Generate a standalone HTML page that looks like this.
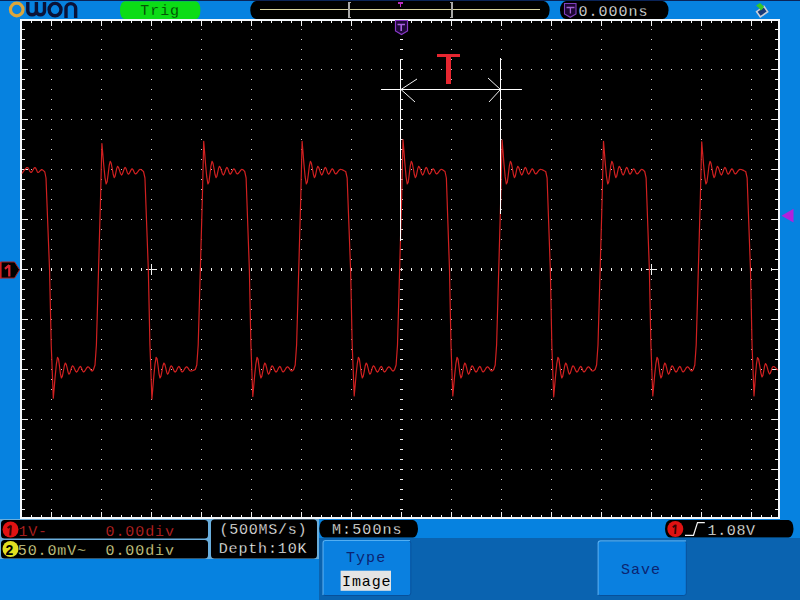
<!DOCTYPE html>
<html><head><meta charset="utf-8"><style>
html,body{margin:0;padding:0;width:800px;height:600px;overflow:hidden;background:#0682e0}
svg{display:block;position:absolute;left:0;top:0}
</style></head><body>
<svg width="800" height="600" viewBox="0 0 800 600">
<rect x="0" y="0" width="800" height="600" fill="#0682e0"/>
<rect x="0" y="0" width="800" height="1" fill="#0a2458"/>
<!-- logo -->
<circle cx="16.75" cy="9.5" r="6.3" fill="none" stroke="#dca63c" stroke-width="3.2"/>
<g fill="none" stroke="#0a1238" stroke-width="3.4">
<path d="M27.8,2 V11 A4.3,3.8 0 0 0 36.4,11 V2 M36.4,11 A4.05,3.8 0 0 0 44.5,11 V2"/>
<ellipse cx="55.05" cy="9.6" rx="5.95" ry="6.2"/>
<path d="M66,18 V8.2 A4.83,4.8 0 0 1 75.65,8.2 V18"/>
</g>
<!-- Trig -->
<rect x="120" y="1.2" width="80.4" height="17.9" rx="4.5" ry="8.7" fill="#0cdc16"/>
<text x="140.3" y="14.5" font-family="Liberation Mono" font-size="15" stroke="#0cdc16" stroke-width="0.3" letter-spacing="0.93" fill="#002000">Trig</text>
<!-- trigger position bar -->
<rect x="250.3" y="1.1" width="299.3" height="17.9" rx="6" ry="8.7" fill="#000"/>
<rect x="260" y="9" width="280" height="1" fill="#d8d4a0"/>
<g fill="#a8a8a8" shape-rendering="crispEdges">
<rect x="348" y="2" width="2" height="16"/><rect x="348" y="2" width="3" height="1"/><rect x="348" y="17" width="3" height="1"/>
<rect x="451" y="2" width="2" height="16"/><rect x="450" y="2" width="3" height="1"/><rect x="450" y="17" width="3" height="1"/>
</g>
<g fill="#b82cc0" shape-rendering="crispEdges"><rect x="398" y="2" width="5" height="2"/><rect x="400" y="4" width="1" height="3"/></g>
<!-- time pill -->
<rect x="560" y="1.1" width="108.5" height="17.9" rx="6" ry="8.7" fill="#000"/>
<path d="M564.5,3.5 h11.5 v10.5 l-5.75,3.3 l-5.75,-3.3 z" fill="#1e0634" stroke="#8040c0" stroke-width="1.1"/>
<path d="M566.5,7.5 h8 M570.4,7.5 v6" stroke="#a060d0" stroke-width="1.3" fill="none"/>
<text x="578.5" y="16" font-family="Liberation Mono" font-size="15" stroke="#000" stroke-width="0.3" letter-spacing="1.0" fill="#ffffff">0.000ns</text>
<!-- usb icon -->
<g transform="translate(762,11.5) rotate(-35)">
<rect x="-4.5" y="-3" width="9" height="6.5" fill="#1a3a78" stroke="#c8ccd8" stroke-width="1.6"/>
</g>
<path d="M756,5.5 L760,3 L764,6.5 L762.5,9 L760.5,10.5 L759,8 Z" fill="#38c828"/>
<!-- screen -->
<rect x="20" y="19" width="760" height="500" fill="#f4f8fc"/>
<rect x="22" y="21" width="756" height="496" fill="#000"/>
<path d="M31,69h1v1h-1zM41,69h1v1h-1zM51,69h1v1h-1zM61,69h1v1h-1zM71,69h1v1h-1zM81,69h1v1h-1zM91,69h1v1h-1zM101,69h1v1h-1zM111,69h1v1h-1zM121,69h1v1h-1zM131,69h1v1h-1zM141,69h1v1h-1zM151,69h1v1h-1zM161,69h1v1h-1zM171,69h1v1h-1zM181,69h1v1h-1zM191,69h1v1h-1zM201,69h1v1h-1zM211,69h1v1h-1zM221,69h1v1h-1zM231,69h1v1h-1zM241,69h1v1h-1zM251,69h1v1h-1zM261,69h1v1h-1zM271,69h1v1h-1zM281,69h1v1h-1zM291,69h1v1h-1zM301,69h1v1h-1zM311,69h1v1h-1zM321,69h1v1h-1zM331,69h1v1h-1zM341,69h1v1h-1zM351,69h1v1h-1zM361,69h1v1h-1zM371,69h1v1h-1zM381,69h1v1h-1zM391,69h1v1h-1zM401,69h1v1h-1zM411,69h1v1h-1zM421,69h1v1h-1zM431,69h1v1h-1zM441,69h1v1h-1zM451,69h1v1h-1zM461,69h1v1h-1zM471,69h1v1h-1zM481,69h1v1h-1zM491,69h1v1h-1zM501,69h1v1h-1zM511,69h1v1h-1zM521,69h1v1h-1zM531,69h1v1h-1zM541,69h1v1h-1zM551,69h1v1h-1zM561,69h1v1h-1zM571,69h1v1h-1zM581,69h1v1h-1zM591,69h1v1h-1zM601,69h1v1h-1zM611,69h1v1h-1zM621,69h1v1h-1zM631,69h1v1h-1zM641,69h1v1h-1zM651,69h1v1h-1zM661,69h1v1h-1zM671,69h1v1h-1zM681,69h1v1h-1zM691,69h1v1h-1zM701,69h1v1h-1zM711,69h1v1h-1zM721,69h1v1h-1zM731,69h1v1h-1zM741,69h1v1h-1zM751,69h1v1h-1zM761,69h1v1h-1zM771,69h1v1h-1zM31,119h1v1h-1zM41,119h1v1h-1zM51,119h1v1h-1zM61,119h1v1h-1zM71,119h1v1h-1zM81,119h1v1h-1zM91,119h1v1h-1zM101,119h1v1h-1zM111,119h1v1h-1zM121,119h1v1h-1zM131,119h1v1h-1zM141,119h1v1h-1zM151,119h1v1h-1zM161,119h1v1h-1zM171,119h1v1h-1zM181,119h1v1h-1zM191,119h1v1h-1zM201,119h1v1h-1zM211,119h1v1h-1zM221,119h1v1h-1zM231,119h1v1h-1zM241,119h1v1h-1zM251,119h1v1h-1zM261,119h1v1h-1zM271,119h1v1h-1zM281,119h1v1h-1zM291,119h1v1h-1zM301,119h1v1h-1zM311,119h1v1h-1zM321,119h1v1h-1zM331,119h1v1h-1zM341,119h1v1h-1zM351,119h1v1h-1zM361,119h1v1h-1zM371,119h1v1h-1zM381,119h1v1h-1zM391,119h1v1h-1zM401,119h1v1h-1zM411,119h1v1h-1zM421,119h1v1h-1zM431,119h1v1h-1zM441,119h1v1h-1zM451,119h1v1h-1zM461,119h1v1h-1zM471,119h1v1h-1zM481,119h1v1h-1zM491,119h1v1h-1zM501,119h1v1h-1zM511,119h1v1h-1zM521,119h1v1h-1zM531,119h1v1h-1zM541,119h1v1h-1zM551,119h1v1h-1zM561,119h1v1h-1zM571,119h1v1h-1zM581,119h1v1h-1zM591,119h1v1h-1zM601,119h1v1h-1zM611,119h1v1h-1zM621,119h1v1h-1zM631,119h1v1h-1zM641,119h1v1h-1zM651,119h1v1h-1zM661,119h1v1h-1zM671,119h1v1h-1zM681,119h1v1h-1zM691,119h1v1h-1zM701,119h1v1h-1zM711,119h1v1h-1zM721,119h1v1h-1zM731,119h1v1h-1zM741,119h1v1h-1zM751,119h1v1h-1zM761,119h1v1h-1zM771,119h1v1h-1zM31,169h1v1h-1zM41,169h1v1h-1zM51,169h1v1h-1zM61,169h1v1h-1zM71,169h1v1h-1zM81,169h1v1h-1zM91,169h1v1h-1zM101,169h1v1h-1zM111,169h1v1h-1zM121,169h1v1h-1zM131,169h1v1h-1zM141,169h1v1h-1zM151,169h1v1h-1zM161,169h1v1h-1zM171,169h1v1h-1zM181,169h1v1h-1zM191,169h1v1h-1zM201,169h1v1h-1zM211,169h1v1h-1zM221,169h1v1h-1zM231,169h1v1h-1zM241,169h1v1h-1zM251,169h1v1h-1zM261,169h1v1h-1zM271,169h1v1h-1zM281,169h1v1h-1zM291,169h1v1h-1zM301,169h1v1h-1zM311,169h1v1h-1zM321,169h1v1h-1zM331,169h1v1h-1zM341,169h1v1h-1zM351,169h1v1h-1zM361,169h1v1h-1zM371,169h1v1h-1zM381,169h1v1h-1zM391,169h1v1h-1zM401,169h1v1h-1zM411,169h1v1h-1zM421,169h1v1h-1zM431,169h1v1h-1zM441,169h1v1h-1zM451,169h1v1h-1zM461,169h1v1h-1zM471,169h1v1h-1zM481,169h1v1h-1zM491,169h1v1h-1zM501,169h1v1h-1zM511,169h1v1h-1zM521,169h1v1h-1zM531,169h1v1h-1zM541,169h1v1h-1zM551,169h1v1h-1zM561,169h1v1h-1zM571,169h1v1h-1zM581,169h1v1h-1zM591,169h1v1h-1zM601,169h1v1h-1zM611,169h1v1h-1zM621,169h1v1h-1zM631,169h1v1h-1zM641,169h1v1h-1zM651,169h1v1h-1zM661,169h1v1h-1zM671,169h1v1h-1zM681,169h1v1h-1zM691,169h1v1h-1zM701,169h1v1h-1zM711,169h1v1h-1zM721,169h1v1h-1zM731,169h1v1h-1zM741,169h1v1h-1zM751,169h1v1h-1zM761,169h1v1h-1zM771,169h1v1h-1zM31,219h1v1h-1zM41,219h1v1h-1zM51,219h1v1h-1zM61,219h1v1h-1zM71,219h1v1h-1zM81,219h1v1h-1zM91,219h1v1h-1zM101,219h1v1h-1zM111,219h1v1h-1zM121,219h1v1h-1zM131,219h1v1h-1zM141,219h1v1h-1zM151,219h1v1h-1zM161,219h1v1h-1zM171,219h1v1h-1zM181,219h1v1h-1zM191,219h1v1h-1zM201,219h1v1h-1zM211,219h1v1h-1zM221,219h1v1h-1zM231,219h1v1h-1zM241,219h1v1h-1zM251,219h1v1h-1zM261,219h1v1h-1zM271,219h1v1h-1zM281,219h1v1h-1zM291,219h1v1h-1zM301,219h1v1h-1zM311,219h1v1h-1zM321,219h1v1h-1zM331,219h1v1h-1zM341,219h1v1h-1zM351,219h1v1h-1zM361,219h1v1h-1zM371,219h1v1h-1zM381,219h1v1h-1zM391,219h1v1h-1zM401,219h1v1h-1zM411,219h1v1h-1zM421,219h1v1h-1zM431,219h1v1h-1zM441,219h1v1h-1zM451,219h1v1h-1zM461,219h1v1h-1zM471,219h1v1h-1zM481,219h1v1h-1zM491,219h1v1h-1zM501,219h1v1h-1zM511,219h1v1h-1zM521,219h1v1h-1zM531,219h1v1h-1zM541,219h1v1h-1zM551,219h1v1h-1zM561,219h1v1h-1zM571,219h1v1h-1zM581,219h1v1h-1zM591,219h1v1h-1zM601,219h1v1h-1zM611,219h1v1h-1zM621,219h1v1h-1zM631,219h1v1h-1zM641,219h1v1h-1zM651,219h1v1h-1zM661,219h1v1h-1zM671,219h1v1h-1zM681,219h1v1h-1zM691,219h1v1h-1zM701,219h1v1h-1zM711,219h1v1h-1zM721,219h1v1h-1zM731,219h1v1h-1zM741,219h1v1h-1zM751,219h1v1h-1zM761,219h1v1h-1zM771,219h1v1h-1zM31,319h1v1h-1zM41,319h1v1h-1zM51,319h1v1h-1zM61,319h1v1h-1zM71,319h1v1h-1zM81,319h1v1h-1zM91,319h1v1h-1zM101,319h1v1h-1zM111,319h1v1h-1zM121,319h1v1h-1zM131,319h1v1h-1zM141,319h1v1h-1zM151,319h1v1h-1zM161,319h1v1h-1zM171,319h1v1h-1zM181,319h1v1h-1zM191,319h1v1h-1zM201,319h1v1h-1zM211,319h1v1h-1zM221,319h1v1h-1zM231,319h1v1h-1zM241,319h1v1h-1zM251,319h1v1h-1zM261,319h1v1h-1zM271,319h1v1h-1zM281,319h1v1h-1zM291,319h1v1h-1zM301,319h1v1h-1zM311,319h1v1h-1zM321,319h1v1h-1zM331,319h1v1h-1zM341,319h1v1h-1zM351,319h1v1h-1zM361,319h1v1h-1zM371,319h1v1h-1zM381,319h1v1h-1zM391,319h1v1h-1zM401,319h1v1h-1zM411,319h1v1h-1zM421,319h1v1h-1zM431,319h1v1h-1zM441,319h1v1h-1zM451,319h1v1h-1zM461,319h1v1h-1zM471,319h1v1h-1zM481,319h1v1h-1zM491,319h1v1h-1zM501,319h1v1h-1zM511,319h1v1h-1zM521,319h1v1h-1zM531,319h1v1h-1zM541,319h1v1h-1zM551,319h1v1h-1zM561,319h1v1h-1zM571,319h1v1h-1zM581,319h1v1h-1zM591,319h1v1h-1zM601,319h1v1h-1zM611,319h1v1h-1zM621,319h1v1h-1zM631,319h1v1h-1zM641,319h1v1h-1zM651,319h1v1h-1zM661,319h1v1h-1zM671,319h1v1h-1zM681,319h1v1h-1zM691,319h1v1h-1zM701,319h1v1h-1zM711,319h1v1h-1zM721,319h1v1h-1zM731,319h1v1h-1zM741,319h1v1h-1zM751,319h1v1h-1zM761,319h1v1h-1zM771,319h1v1h-1zM31,369h1v1h-1zM41,369h1v1h-1zM51,369h1v1h-1zM61,369h1v1h-1zM71,369h1v1h-1zM81,369h1v1h-1zM91,369h1v1h-1zM101,369h1v1h-1zM111,369h1v1h-1zM121,369h1v1h-1zM131,369h1v1h-1zM141,369h1v1h-1zM151,369h1v1h-1zM161,369h1v1h-1zM171,369h1v1h-1zM181,369h1v1h-1zM191,369h1v1h-1zM201,369h1v1h-1zM211,369h1v1h-1zM221,369h1v1h-1zM231,369h1v1h-1zM241,369h1v1h-1zM251,369h1v1h-1zM261,369h1v1h-1zM271,369h1v1h-1zM281,369h1v1h-1zM291,369h1v1h-1zM301,369h1v1h-1zM311,369h1v1h-1zM321,369h1v1h-1zM331,369h1v1h-1zM341,369h1v1h-1zM351,369h1v1h-1zM361,369h1v1h-1zM371,369h1v1h-1zM381,369h1v1h-1zM391,369h1v1h-1zM401,369h1v1h-1zM411,369h1v1h-1zM421,369h1v1h-1zM431,369h1v1h-1zM441,369h1v1h-1zM451,369h1v1h-1zM461,369h1v1h-1zM471,369h1v1h-1zM481,369h1v1h-1zM491,369h1v1h-1zM501,369h1v1h-1zM511,369h1v1h-1zM521,369h1v1h-1zM531,369h1v1h-1zM541,369h1v1h-1zM551,369h1v1h-1zM561,369h1v1h-1zM571,369h1v1h-1zM581,369h1v1h-1zM591,369h1v1h-1zM601,369h1v1h-1zM611,369h1v1h-1zM621,369h1v1h-1zM631,369h1v1h-1zM641,369h1v1h-1zM651,369h1v1h-1zM661,369h1v1h-1zM671,369h1v1h-1zM681,369h1v1h-1zM691,369h1v1h-1zM701,369h1v1h-1zM711,369h1v1h-1zM721,369h1v1h-1zM731,369h1v1h-1zM741,369h1v1h-1zM751,369h1v1h-1zM761,369h1v1h-1zM771,369h1v1h-1zM31,419h1v1h-1zM41,419h1v1h-1zM51,419h1v1h-1zM61,419h1v1h-1zM71,419h1v1h-1zM81,419h1v1h-1zM91,419h1v1h-1zM101,419h1v1h-1zM111,419h1v1h-1zM121,419h1v1h-1zM131,419h1v1h-1zM141,419h1v1h-1zM151,419h1v1h-1zM161,419h1v1h-1zM171,419h1v1h-1zM181,419h1v1h-1zM191,419h1v1h-1zM201,419h1v1h-1zM211,419h1v1h-1zM221,419h1v1h-1zM231,419h1v1h-1zM241,419h1v1h-1zM251,419h1v1h-1zM261,419h1v1h-1zM271,419h1v1h-1zM281,419h1v1h-1zM291,419h1v1h-1zM301,419h1v1h-1zM311,419h1v1h-1zM321,419h1v1h-1zM331,419h1v1h-1zM341,419h1v1h-1zM351,419h1v1h-1zM361,419h1v1h-1zM371,419h1v1h-1zM381,419h1v1h-1zM391,419h1v1h-1zM401,419h1v1h-1zM411,419h1v1h-1zM421,419h1v1h-1zM431,419h1v1h-1zM441,419h1v1h-1zM451,419h1v1h-1zM461,419h1v1h-1zM471,419h1v1h-1zM481,419h1v1h-1zM491,419h1v1h-1zM501,419h1v1h-1zM511,419h1v1h-1zM521,419h1v1h-1zM531,419h1v1h-1zM541,419h1v1h-1zM551,419h1v1h-1zM561,419h1v1h-1zM571,419h1v1h-1zM581,419h1v1h-1zM591,419h1v1h-1zM601,419h1v1h-1zM611,419h1v1h-1zM621,419h1v1h-1zM631,419h1v1h-1zM641,419h1v1h-1zM651,419h1v1h-1zM661,419h1v1h-1zM671,419h1v1h-1zM681,419h1v1h-1zM691,419h1v1h-1zM701,419h1v1h-1zM711,419h1v1h-1zM721,419h1v1h-1zM731,419h1v1h-1zM741,419h1v1h-1zM751,419h1v1h-1zM761,419h1v1h-1zM771,419h1v1h-1zM31,469h1v1h-1zM41,469h1v1h-1zM51,469h1v1h-1zM61,469h1v1h-1zM71,469h1v1h-1zM81,469h1v1h-1zM91,469h1v1h-1zM101,469h1v1h-1zM111,469h1v1h-1zM121,469h1v1h-1zM131,469h1v1h-1zM141,469h1v1h-1zM151,469h1v1h-1zM161,469h1v1h-1zM171,469h1v1h-1zM181,469h1v1h-1zM191,469h1v1h-1zM201,469h1v1h-1zM211,469h1v1h-1zM221,469h1v1h-1zM231,469h1v1h-1zM241,469h1v1h-1zM251,469h1v1h-1zM261,469h1v1h-1zM271,469h1v1h-1zM281,469h1v1h-1zM291,469h1v1h-1zM301,469h1v1h-1zM311,469h1v1h-1zM321,469h1v1h-1zM331,469h1v1h-1zM341,469h1v1h-1zM351,469h1v1h-1zM361,469h1v1h-1zM371,469h1v1h-1zM381,469h1v1h-1zM391,469h1v1h-1zM401,469h1v1h-1zM411,469h1v1h-1zM421,469h1v1h-1zM431,469h1v1h-1zM441,469h1v1h-1zM451,469h1v1h-1zM461,469h1v1h-1zM471,469h1v1h-1zM481,469h1v1h-1zM491,469h1v1h-1zM501,469h1v1h-1zM511,469h1v1h-1zM521,469h1v1h-1zM531,469h1v1h-1zM541,469h1v1h-1zM551,469h1v1h-1zM561,469h1v1h-1zM571,469h1v1h-1zM581,469h1v1h-1zM591,469h1v1h-1zM601,469h1v1h-1zM611,469h1v1h-1zM621,469h1v1h-1zM631,469h1v1h-1zM641,469h1v1h-1zM651,469h1v1h-1zM661,469h1v1h-1zM671,469h1v1h-1zM681,469h1v1h-1zM691,469h1v1h-1zM701,469h1v1h-1zM711,469h1v1h-1zM721,469h1v1h-1zM731,469h1v1h-1zM741,469h1v1h-1zM751,469h1v1h-1zM761,469h1v1h-1zM771,469h1v1h-1zM51,29h1v1h-1zM51,39h1v1h-1zM51,49h1v1h-1zM51,59h1v1h-1zM51,79h1v1h-1zM51,89h1v1h-1zM51,99h1v1h-1zM51,109h1v1h-1zM51,129h1v1h-1zM51,139h1v1h-1zM51,149h1v1h-1zM51,159h1v1h-1zM51,179h1v1h-1zM51,189h1v1h-1zM51,199h1v1h-1zM51,209h1v1h-1zM51,229h1v1h-1zM51,239h1v1h-1zM51,249h1v1h-1zM51,259h1v1h-1zM51,279h1v1h-1zM51,289h1v1h-1zM51,299h1v1h-1zM51,309h1v1h-1zM51,329h1v1h-1zM51,339h1v1h-1zM51,349h1v1h-1zM51,359h1v1h-1zM51,379h1v1h-1zM51,389h1v1h-1zM51,399h1v1h-1zM51,409h1v1h-1zM51,429h1v1h-1zM51,439h1v1h-1zM51,449h1v1h-1zM51,459h1v1h-1zM51,479h1v1h-1zM51,489h1v1h-1zM51,499h1v1h-1zM51,509h1v1h-1zM101,29h1v1h-1zM101,39h1v1h-1zM101,49h1v1h-1zM101,59h1v1h-1zM101,79h1v1h-1zM101,89h1v1h-1zM101,99h1v1h-1zM101,109h1v1h-1zM101,129h1v1h-1zM101,139h1v1h-1zM101,149h1v1h-1zM101,159h1v1h-1zM101,179h1v1h-1zM101,189h1v1h-1zM101,199h1v1h-1zM101,209h1v1h-1zM101,229h1v1h-1zM101,239h1v1h-1zM101,249h1v1h-1zM101,259h1v1h-1zM101,279h1v1h-1zM101,289h1v1h-1zM101,299h1v1h-1zM101,309h1v1h-1zM101,329h1v1h-1zM101,339h1v1h-1zM101,349h1v1h-1zM101,359h1v1h-1zM101,379h1v1h-1zM101,389h1v1h-1zM101,399h1v1h-1zM101,409h1v1h-1zM101,429h1v1h-1zM101,439h1v1h-1zM101,449h1v1h-1zM101,459h1v1h-1zM101,479h1v1h-1zM101,489h1v1h-1zM101,499h1v1h-1zM101,509h1v1h-1zM151,29h1v1h-1zM151,39h1v1h-1zM151,49h1v1h-1zM151,59h1v1h-1zM151,79h1v1h-1zM151,89h1v1h-1zM151,99h1v1h-1zM151,109h1v1h-1zM151,129h1v1h-1zM151,139h1v1h-1zM151,149h1v1h-1zM151,159h1v1h-1zM151,179h1v1h-1zM151,189h1v1h-1zM151,199h1v1h-1zM151,209h1v1h-1zM151,229h1v1h-1zM151,239h1v1h-1zM151,249h1v1h-1zM151,259h1v1h-1zM151,279h1v1h-1zM151,289h1v1h-1zM151,299h1v1h-1zM151,309h1v1h-1zM151,329h1v1h-1zM151,339h1v1h-1zM151,349h1v1h-1zM151,359h1v1h-1zM151,379h1v1h-1zM151,389h1v1h-1zM151,399h1v1h-1zM151,409h1v1h-1zM151,429h1v1h-1zM151,439h1v1h-1zM151,449h1v1h-1zM151,459h1v1h-1zM151,479h1v1h-1zM151,489h1v1h-1zM151,499h1v1h-1zM151,509h1v1h-1zM201,29h1v1h-1zM201,39h1v1h-1zM201,49h1v1h-1zM201,59h1v1h-1zM201,79h1v1h-1zM201,89h1v1h-1zM201,99h1v1h-1zM201,109h1v1h-1zM201,129h1v1h-1zM201,139h1v1h-1zM201,149h1v1h-1zM201,159h1v1h-1zM201,179h1v1h-1zM201,189h1v1h-1zM201,199h1v1h-1zM201,209h1v1h-1zM201,229h1v1h-1zM201,239h1v1h-1zM201,249h1v1h-1zM201,259h1v1h-1zM201,279h1v1h-1zM201,289h1v1h-1zM201,299h1v1h-1zM201,309h1v1h-1zM201,329h1v1h-1zM201,339h1v1h-1zM201,349h1v1h-1zM201,359h1v1h-1zM201,379h1v1h-1zM201,389h1v1h-1zM201,399h1v1h-1zM201,409h1v1h-1zM201,429h1v1h-1zM201,439h1v1h-1zM201,449h1v1h-1zM201,459h1v1h-1zM201,479h1v1h-1zM201,489h1v1h-1zM201,499h1v1h-1zM201,509h1v1h-1zM251,29h1v1h-1zM251,39h1v1h-1zM251,49h1v1h-1zM251,59h1v1h-1zM251,79h1v1h-1zM251,89h1v1h-1zM251,99h1v1h-1zM251,109h1v1h-1zM251,129h1v1h-1zM251,139h1v1h-1zM251,149h1v1h-1zM251,159h1v1h-1zM251,179h1v1h-1zM251,189h1v1h-1zM251,199h1v1h-1zM251,209h1v1h-1zM251,229h1v1h-1zM251,239h1v1h-1zM251,249h1v1h-1zM251,259h1v1h-1zM251,279h1v1h-1zM251,289h1v1h-1zM251,299h1v1h-1zM251,309h1v1h-1zM251,329h1v1h-1zM251,339h1v1h-1zM251,349h1v1h-1zM251,359h1v1h-1zM251,379h1v1h-1zM251,389h1v1h-1zM251,399h1v1h-1zM251,409h1v1h-1zM251,429h1v1h-1zM251,439h1v1h-1zM251,449h1v1h-1zM251,459h1v1h-1zM251,479h1v1h-1zM251,489h1v1h-1zM251,499h1v1h-1zM251,509h1v1h-1zM301,29h1v1h-1zM301,39h1v1h-1zM301,49h1v1h-1zM301,59h1v1h-1zM301,79h1v1h-1zM301,89h1v1h-1zM301,99h1v1h-1zM301,109h1v1h-1zM301,129h1v1h-1zM301,139h1v1h-1zM301,149h1v1h-1zM301,159h1v1h-1zM301,179h1v1h-1zM301,189h1v1h-1zM301,199h1v1h-1zM301,209h1v1h-1zM301,229h1v1h-1zM301,239h1v1h-1zM301,249h1v1h-1zM301,259h1v1h-1zM301,279h1v1h-1zM301,289h1v1h-1zM301,299h1v1h-1zM301,309h1v1h-1zM301,329h1v1h-1zM301,339h1v1h-1zM301,349h1v1h-1zM301,359h1v1h-1zM301,379h1v1h-1zM301,389h1v1h-1zM301,399h1v1h-1zM301,409h1v1h-1zM301,429h1v1h-1zM301,439h1v1h-1zM301,449h1v1h-1zM301,459h1v1h-1zM301,479h1v1h-1zM301,489h1v1h-1zM301,499h1v1h-1zM301,509h1v1h-1zM351,29h1v1h-1zM351,39h1v1h-1zM351,49h1v1h-1zM351,59h1v1h-1zM351,79h1v1h-1zM351,89h1v1h-1zM351,99h1v1h-1zM351,109h1v1h-1zM351,129h1v1h-1zM351,139h1v1h-1zM351,149h1v1h-1zM351,159h1v1h-1zM351,179h1v1h-1zM351,189h1v1h-1zM351,199h1v1h-1zM351,209h1v1h-1zM351,229h1v1h-1zM351,239h1v1h-1zM351,249h1v1h-1zM351,259h1v1h-1zM351,279h1v1h-1zM351,289h1v1h-1zM351,299h1v1h-1zM351,309h1v1h-1zM351,329h1v1h-1zM351,339h1v1h-1zM351,349h1v1h-1zM351,359h1v1h-1zM351,379h1v1h-1zM351,389h1v1h-1zM351,399h1v1h-1zM351,409h1v1h-1zM351,429h1v1h-1zM351,439h1v1h-1zM351,449h1v1h-1zM351,459h1v1h-1zM351,479h1v1h-1zM351,489h1v1h-1zM351,499h1v1h-1zM351,509h1v1h-1zM451,29h1v1h-1zM451,39h1v1h-1zM451,49h1v1h-1zM451,59h1v1h-1zM451,79h1v1h-1zM451,89h1v1h-1zM451,99h1v1h-1zM451,109h1v1h-1zM451,129h1v1h-1zM451,139h1v1h-1zM451,149h1v1h-1zM451,159h1v1h-1zM451,179h1v1h-1zM451,189h1v1h-1zM451,199h1v1h-1zM451,209h1v1h-1zM451,229h1v1h-1zM451,239h1v1h-1zM451,249h1v1h-1zM451,259h1v1h-1zM451,279h1v1h-1zM451,289h1v1h-1zM451,299h1v1h-1zM451,309h1v1h-1zM451,329h1v1h-1zM451,339h1v1h-1zM451,349h1v1h-1zM451,359h1v1h-1zM451,379h1v1h-1zM451,389h1v1h-1zM451,399h1v1h-1zM451,409h1v1h-1zM451,429h1v1h-1zM451,439h1v1h-1zM451,449h1v1h-1zM451,459h1v1h-1zM451,479h1v1h-1zM451,489h1v1h-1zM451,499h1v1h-1zM451,509h1v1h-1zM501,29h1v1h-1zM501,39h1v1h-1zM501,49h1v1h-1zM501,59h1v1h-1zM501,79h1v1h-1zM501,89h1v1h-1zM501,99h1v1h-1zM501,109h1v1h-1zM501,129h1v1h-1zM501,139h1v1h-1zM501,149h1v1h-1zM501,159h1v1h-1zM501,179h1v1h-1zM501,189h1v1h-1zM501,199h1v1h-1zM501,209h1v1h-1zM501,229h1v1h-1zM501,239h1v1h-1zM501,249h1v1h-1zM501,259h1v1h-1zM501,279h1v1h-1zM501,289h1v1h-1zM501,299h1v1h-1zM501,309h1v1h-1zM501,329h1v1h-1zM501,339h1v1h-1zM501,349h1v1h-1zM501,359h1v1h-1zM501,379h1v1h-1zM501,389h1v1h-1zM501,399h1v1h-1zM501,409h1v1h-1zM501,429h1v1h-1zM501,439h1v1h-1zM501,449h1v1h-1zM501,459h1v1h-1zM501,479h1v1h-1zM501,489h1v1h-1zM501,499h1v1h-1zM501,509h1v1h-1zM551,29h1v1h-1zM551,39h1v1h-1zM551,49h1v1h-1zM551,59h1v1h-1zM551,79h1v1h-1zM551,89h1v1h-1zM551,99h1v1h-1zM551,109h1v1h-1zM551,129h1v1h-1zM551,139h1v1h-1zM551,149h1v1h-1zM551,159h1v1h-1zM551,179h1v1h-1zM551,189h1v1h-1zM551,199h1v1h-1zM551,209h1v1h-1zM551,229h1v1h-1zM551,239h1v1h-1zM551,249h1v1h-1zM551,259h1v1h-1zM551,279h1v1h-1zM551,289h1v1h-1zM551,299h1v1h-1zM551,309h1v1h-1zM551,329h1v1h-1zM551,339h1v1h-1zM551,349h1v1h-1zM551,359h1v1h-1zM551,379h1v1h-1zM551,389h1v1h-1zM551,399h1v1h-1zM551,409h1v1h-1zM551,429h1v1h-1zM551,439h1v1h-1zM551,449h1v1h-1zM551,459h1v1h-1zM551,479h1v1h-1zM551,489h1v1h-1zM551,499h1v1h-1zM551,509h1v1h-1zM601,29h1v1h-1zM601,39h1v1h-1zM601,49h1v1h-1zM601,59h1v1h-1zM601,79h1v1h-1zM601,89h1v1h-1zM601,99h1v1h-1zM601,109h1v1h-1zM601,129h1v1h-1zM601,139h1v1h-1zM601,149h1v1h-1zM601,159h1v1h-1zM601,179h1v1h-1zM601,189h1v1h-1zM601,199h1v1h-1zM601,209h1v1h-1zM601,229h1v1h-1zM601,239h1v1h-1zM601,249h1v1h-1zM601,259h1v1h-1zM601,279h1v1h-1zM601,289h1v1h-1zM601,299h1v1h-1zM601,309h1v1h-1zM601,329h1v1h-1zM601,339h1v1h-1zM601,349h1v1h-1zM601,359h1v1h-1zM601,379h1v1h-1zM601,389h1v1h-1zM601,399h1v1h-1zM601,409h1v1h-1zM601,429h1v1h-1zM601,439h1v1h-1zM601,449h1v1h-1zM601,459h1v1h-1zM601,479h1v1h-1zM601,489h1v1h-1zM601,499h1v1h-1zM601,509h1v1h-1zM651,29h1v1h-1zM651,39h1v1h-1zM651,49h1v1h-1zM651,59h1v1h-1zM651,79h1v1h-1zM651,89h1v1h-1zM651,99h1v1h-1zM651,109h1v1h-1zM651,129h1v1h-1zM651,139h1v1h-1zM651,149h1v1h-1zM651,159h1v1h-1zM651,179h1v1h-1zM651,189h1v1h-1zM651,199h1v1h-1zM651,209h1v1h-1zM651,229h1v1h-1zM651,239h1v1h-1zM651,249h1v1h-1zM651,259h1v1h-1zM651,279h1v1h-1zM651,289h1v1h-1zM651,299h1v1h-1zM651,309h1v1h-1zM651,329h1v1h-1zM651,339h1v1h-1zM651,349h1v1h-1zM651,359h1v1h-1zM651,379h1v1h-1zM651,389h1v1h-1zM651,399h1v1h-1zM651,409h1v1h-1zM651,429h1v1h-1zM651,439h1v1h-1zM651,449h1v1h-1zM651,459h1v1h-1zM651,479h1v1h-1zM651,489h1v1h-1zM651,499h1v1h-1zM651,509h1v1h-1zM701,29h1v1h-1zM701,39h1v1h-1zM701,49h1v1h-1zM701,59h1v1h-1zM701,79h1v1h-1zM701,89h1v1h-1zM701,99h1v1h-1zM701,109h1v1h-1zM701,129h1v1h-1zM701,139h1v1h-1zM701,149h1v1h-1zM701,159h1v1h-1zM701,179h1v1h-1zM701,189h1v1h-1zM701,199h1v1h-1zM701,209h1v1h-1zM701,229h1v1h-1zM701,239h1v1h-1zM701,249h1v1h-1zM701,259h1v1h-1zM701,279h1v1h-1zM701,289h1v1h-1zM701,299h1v1h-1zM701,309h1v1h-1zM701,329h1v1h-1zM701,339h1v1h-1zM701,349h1v1h-1zM701,359h1v1h-1zM701,379h1v1h-1zM701,389h1v1h-1zM701,399h1v1h-1zM701,409h1v1h-1zM701,429h1v1h-1zM701,439h1v1h-1zM701,449h1v1h-1zM701,459h1v1h-1zM701,479h1v1h-1zM701,489h1v1h-1zM701,499h1v1h-1zM701,509h1v1h-1zM751,29h1v1h-1zM751,39h1v1h-1zM751,49h1v1h-1zM751,59h1v1h-1zM751,79h1v1h-1zM751,89h1v1h-1zM751,99h1v1h-1zM751,109h1v1h-1zM751,129h1v1h-1zM751,139h1v1h-1zM751,149h1v1h-1zM751,159h1v1h-1zM751,179h1v1h-1zM751,189h1v1h-1zM751,199h1v1h-1zM751,209h1v1h-1zM751,229h1v1h-1zM751,239h1v1h-1zM751,249h1v1h-1zM751,259h1v1h-1zM751,279h1v1h-1zM751,289h1v1h-1zM751,299h1v1h-1zM751,309h1v1h-1zM751,329h1v1h-1zM751,339h1v1h-1zM751,349h1v1h-1zM751,359h1v1h-1zM751,379h1v1h-1zM751,389h1v1h-1zM751,399h1v1h-1zM751,409h1v1h-1zM751,429h1v1h-1zM751,439h1v1h-1zM751,449h1v1h-1zM751,459h1v1h-1zM751,479h1v1h-1zM751,489h1v1h-1zM751,499h1v1h-1zM751,509h1v1h-1z" fill="#cccccc" shape-rendering="crispEdges"/>
<path d="M31,21h1v2h-1zM31,515h1v2h-1zM41,21h1v2h-1zM41,515h1v2h-1zM51,21h1v5h-1zM51,512h1v5h-1zM61,21h1v2h-1zM61,515h1v2h-1zM71,21h1v2h-1zM71,515h1v2h-1zM81,21h1v2h-1zM81,515h1v2h-1zM91,21h1v2h-1zM91,515h1v2h-1zM101,21h1v5h-1zM101,512h1v5h-1zM111,21h1v2h-1zM111,515h1v2h-1zM121,21h1v2h-1zM121,515h1v2h-1zM131,21h1v2h-1zM131,515h1v2h-1zM141,21h1v2h-1zM141,515h1v2h-1zM151,21h1v5h-1zM151,512h1v5h-1zM161,21h1v2h-1zM161,515h1v2h-1zM171,21h1v2h-1zM171,515h1v2h-1zM181,21h1v2h-1zM181,515h1v2h-1zM191,21h1v2h-1zM191,515h1v2h-1zM201,21h1v5h-1zM201,512h1v5h-1zM211,21h1v2h-1zM211,515h1v2h-1zM221,21h1v2h-1zM221,515h1v2h-1zM231,21h1v2h-1zM231,515h1v2h-1zM241,21h1v2h-1zM241,515h1v2h-1zM251,21h1v5h-1zM251,512h1v5h-1zM261,21h1v2h-1zM261,515h1v2h-1zM271,21h1v2h-1zM271,515h1v2h-1zM281,21h1v2h-1zM281,515h1v2h-1zM291,21h1v2h-1zM291,515h1v2h-1zM301,21h1v5h-1zM301,512h1v5h-1zM311,21h1v2h-1zM311,515h1v2h-1zM321,21h1v2h-1zM321,515h1v2h-1zM331,21h1v2h-1zM331,515h1v2h-1zM341,21h1v2h-1zM341,515h1v2h-1zM351,21h1v5h-1zM351,512h1v5h-1zM361,21h1v2h-1zM361,515h1v2h-1zM371,21h1v2h-1zM371,515h1v2h-1zM381,21h1v2h-1zM381,515h1v2h-1zM391,21h1v2h-1zM391,515h1v2h-1zM401,21h1v5h-1zM401,512h1v5h-1zM411,21h1v2h-1zM411,515h1v2h-1zM421,21h1v2h-1zM421,515h1v2h-1zM431,21h1v2h-1zM431,515h1v2h-1zM441,21h1v2h-1zM441,515h1v2h-1zM451,21h1v5h-1zM451,512h1v5h-1zM461,21h1v2h-1zM461,515h1v2h-1zM471,21h1v2h-1zM471,515h1v2h-1zM481,21h1v2h-1zM481,515h1v2h-1zM491,21h1v2h-1zM491,515h1v2h-1zM501,21h1v5h-1zM501,512h1v5h-1zM511,21h1v2h-1zM511,515h1v2h-1zM521,21h1v2h-1zM521,515h1v2h-1zM531,21h1v2h-1zM531,515h1v2h-1zM541,21h1v2h-1zM541,515h1v2h-1zM551,21h1v5h-1zM551,512h1v5h-1zM561,21h1v2h-1zM561,515h1v2h-1zM571,21h1v2h-1zM571,515h1v2h-1zM581,21h1v2h-1zM581,515h1v2h-1zM591,21h1v2h-1zM591,515h1v2h-1zM601,21h1v5h-1zM601,512h1v5h-1zM611,21h1v2h-1zM611,515h1v2h-1zM621,21h1v2h-1zM621,515h1v2h-1zM631,21h1v2h-1zM631,515h1v2h-1zM641,21h1v2h-1zM641,515h1v2h-1zM651,21h1v5h-1zM651,512h1v5h-1zM661,21h1v2h-1zM661,515h1v2h-1zM671,21h1v2h-1zM671,515h1v2h-1zM681,21h1v2h-1zM681,515h1v2h-1zM691,21h1v2h-1zM691,515h1v2h-1zM701,21h1v5h-1zM701,512h1v5h-1zM711,21h1v2h-1zM711,515h1v2h-1zM721,21h1v2h-1zM721,515h1v2h-1zM731,21h1v2h-1zM731,515h1v2h-1zM741,21h1v2h-1zM741,515h1v2h-1zM751,21h1v5h-1zM751,512h1v5h-1zM761,21h1v2h-1zM761,515h1v2h-1zM771,21h1v2h-1zM771,515h1v2h-1zM22,29h3v1h-3zM775,29h3v1h-3zM22,39h3v1h-3zM775,39h3v1h-3zM22,49h3v1h-3zM775,49h3v1h-3zM22,59h3v1h-3zM775,59h3v1h-3zM22,69h6v1h-6zM772,69h6v1h-6zM22,79h3v1h-3zM775,79h3v1h-3zM22,89h3v1h-3zM775,89h3v1h-3zM22,99h3v1h-3zM775,99h3v1h-3zM22,109h3v1h-3zM775,109h3v1h-3zM22,119h6v1h-6zM772,119h6v1h-6zM22,129h3v1h-3zM775,129h3v1h-3zM22,139h3v1h-3zM775,139h3v1h-3zM22,149h3v1h-3zM775,149h3v1h-3zM22,159h3v1h-3zM775,159h3v1h-3zM22,169h6v1h-6zM772,169h6v1h-6zM22,179h3v1h-3zM775,179h3v1h-3zM22,189h3v1h-3zM775,189h3v1h-3zM22,199h3v1h-3zM775,199h3v1h-3zM22,209h3v1h-3zM775,209h3v1h-3zM22,219h6v1h-6zM772,219h6v1h-6zM22,229h3v1h-3zM775,229h3v1h-3zM22,239h3v1h-3zM775,239h3v1h-3zM22,249h3v1h-3zM775,249h3v1h-3zM22,259h3v1h-3zM775,259h3v1h-3zM22,269h6v1h-6zM772,269h6v1h-6zM22,279h3v1h-3zM775,279h3v1h-3zM22,289h3v1h-3zM775,289h3v1h-3zM22,299h3v1h-3zM775,299h3v1h-3zM22,309h3v1h-3zM775,309h3v1h-3zM22,319h6v1h-6zM772,319h6v1h-6zM22,329h3v1h-3zM775,329h3v1h-3zM22,339h3v1h-3zM775,339h3v1h-3zM22,349h3v1h-3zM775,349h3v1h-3zM22,359h3v1h-3zM775,359h3v1h-3zM22,369h6v1h-6zM772,369h6v1h-6zM22,379h3v1h-3zM775,379h3v1h-3zM22,389h3v1h-3zM775,389h3v1h-3zM22,399h3v1h-3zM775,399h3v1h-3zM22,409h3v1h-3zM775,409h3v1h-3zM22,419h6v1h-6zM772,419h6v1h-6zM22,429h3v1h-3zM775,429h3v1h-3zM22,439h3v1h-3zM775,439h3v1h-3zM22,449h3v1h-3zM775,449h3v1h-3zM22,459h3v1h-3zM775,459h3v1h-3zM22,469h6v1h-6zM772,469h6v1h-6zM22,479h3v1h-3zM775,479h3v1h-3zM22,489h3v1h-3zM775,489h3v1h-3zM22,499h3v1h-3zM775,499h3v1h-3zM22,509h3v1h-3zM775,509h3v1h-3zM31,268h1v3h-1zM41,268h1v3h-1zM51,268h1v3h-1zM61,268h1v3h-1zM71,268h1v3h-1zM81,268h1v3h-1zM91,268h1v3h-1zM101,268h1v3h-1zM111,268h1v3h-1zM121,268h1v3h-1zM131,268h1v3h-1zM141,268h1v3h-1zM151,268h1v3h-1zM161,268h1v3h-1zM171,268h1v3h-1zM181,268h1v3h-1zM191,268h1v3h-1zM201,268h1v3h-1zM211,268h1v3h-1zM221,268h1v3h-1zM231,268h1v3h-1zM241,268h1v3h-1zM251,268h1v3h-1zM261,268h1v3h-1zM271,268h1v3h-1zM281,268h1v3h-1zM291,268h1v3h-1zM301,268h1v3h-1zM311,268h1v3h-1zM321,268h1v3h-1zM331,268h1v3h-1zM341,268h1v3h-1zM351,268h1v3h-1zM361,268h1v3h-1zM371,268h1v3h-1zM381,268h1v3h-1zM391,268h1v3h-1zM411,268h1v3h-1zM421,268h1v3h-1zM431,268h1v3h-1zM441,268h1v3h-1zM451,268h1v3h-1zM461,268h1v3h-1zM471,268h1v3h-1zM481,268h1v3h-1zM491,268h1v3h-1zM501,268h1v3h-1zM511,268h1v3h-1zM521,268h1v3h-1zM531,268h1v3h-1zM541,268h1v3h-1zM551,268h1v3h-1zM561,268h1v3h-1zM571,268h1v3h-1zM581,268h1v3h-1zM591,268h1v3h-1zM601,268h1v3h-1zM611,268h1v3h-1zM621,268h1v3h-1zM631,268h1v3h-1zM641,268h1v3h-1zM651,268h1v3h-1zM661,268h1v3h-1zM671,268h1v3h-1zM681,268h1v3h-1zM691,268h1v3h-1zM701,268h1v3h-1zM711,268h1v3h-1zM721,268h1v3h-1zM731,268h1v3h-1zM741,268h1v3h-1zM751,268h1v3h-1zM761,268h1v3h-1zM771,268h1v3h-1zM400,29h3v1h-3zM400,39h3v1h-3zM400,49h3v1h-3zM400,59h3v1h-3zM400,69h3v1h-3zM400,79h3v1h-3zM400,89h3v1h-3zM400,99h3v1h-3zM400,109h3v1h-3zM400,119h3v1h-3zM400,129h3v1h-3zM400,139h3v1h-3zM400,149h3v1h-3zM400,159h3v1h-3zM400,169h3v1h-3zM400,179h3v1h-3zM400,189h3v1h-3zM400,199h3v1h-3zM400,209h3v1h-3zM400,219h3v1h-3zM400,229h3v1h-3zM400,239h3v1h-3zM400,249h3v1h-3zM400,259h3v1h-3zM400,279h3v1h-3zM400,289h3v1h-3zM400,299h3v1h-3zM400,309h3v1h-3zM400,319h3v1h-3zM400,329h3v1h-3zM400,339h3v1h-3zM400,349h3v1h-3zM400,359h3v1h-3zM400,369h3v1h-3zM400,379h3v1h-3zM400,389h3v1h-3zM400,399h3v1h-3zM400,409h3v1h-3zM400,419h3v1h-3zM400,429h3v1h-3zM400,439h3v1h-3zM400,449h3v1h-3zM400,459h3v1h-3zM400,469h3v1h-3zM400,479h3v1h-3zM400,489h3v1h-3zM400,499h3v1h-3zM400,509h3v1h-3zM400,269h3v1h-3z M401,268h1v3h-1zM151,264h1v11h-1z M146,269h11v1h-11zM651,264h1v11h-1z M646,269h11v1h-11z" fill="#f0f0f0" shape-rendering="crispEdges"/>
<!-- waveform -->
<path d="M22.00,173.50 L22.44,172.85 L23.06,171.91 L23.77,170.89 L24.50,170.00 L25.23,169.13 L25.99,168.22 L26.79,167.57 L27.60,167.50 L28.42,168.46 L29.25,170.16 L30.11,171.78 L31.00,172.50 L31.96,171.72 L32.97,170.00 L33.97,168.28 L34.90,167.50 L35.72,168.23 L36.47,169.87 L37.21,171.57 L38.00,172.50 L38.87,172.21 L39.79,171.21 L40.72,170.14 L41.60,169.60 L42.50,169.88 L43.42,170.62 L44.23,171.44 L44.80,172.00 L46.00,178.00 L49.56,270.00 L51.22,345.00 L53.30,398.20 L54.06,389.41 L55.16,376.46 L56.37,364.15 L57.50,357.30 L58.50,358.98 L59.47,366.03 L60.43,373.89 L61.40,378.00 L62.38,376.15 L63.36,371.09 L64.34,365.74 L65.30,363.00 L66.24,364.42 L67.18,368.19 L68.09,372.16 L69.00,374.20 L69.88,373.13 L70.73,370.31 L71.59,367.33 L72.50,365.80 L73.47,366.62 L74.48,368.78 L75.50,371.02 L76.50,372.10 L77.48,371.25 L78.44,369.29 L79.39,367.31 L80.30,366.40 L81.14,367.26 L81.92,369.17 L82.72,371.09 L83.60,372.00 L84.61,371.24 L85.71,369.49 L86.83,367.69 L87.90,366.80 L88.95,367.32 L90.01,368.67 L90.99,370.13 L91.80,371.00 L92.42,370.99 L92.89,370.51 L93.25,369.90 L93.50,369.50 L95.00,365.00 L96.40,345.00 L100.50,200.00 L101.90,143.50 L102.66,152.26 L103.74,165.17 L104.96,177.37 L106.10,184.00 L107.13,181.85 L108.16,174.16 L109.18,165.71 L110.20,161.30 L111.22,163.28 L112.24,168.74 L113.24,174.55 L114.20,177.60 L115.08,176.25 L115.91,172.42 L116.73,168.37 L117.60,166.30 L118.55,167.45 L119.54,170.42 L120.53,173.50 L121.50,175.00 L122.43,173.91 L123.34,171.32 L124.24,168.67 L125.10,167.40 L125.91,168.37 L126.69,170.66 L127.47,173.02 L128.30,174.20 L129.22,173.46 L130.19,171.60 L131.16,169.69 L132.10,168.80 L132.95,169.58 L133.76,171.35 L134.59,173.14 L135.50,174.00 L136.55,173.38 L137.69,171.89 L138.83,170.31 L139.90,169.40 L140.94,169.50 L141.98,170.16 L142.87,170.97 L143.50,171.50 L144.95,178.00 L148.34,270.00 L149.93,345.00 L151.90,399.00 L152.66,390.04 L153.76,376.86 L154.97,364.31 L156.10,357.30 L157.10,358.92 L158.07,365.98 L159.03,373.87 L160.00,378.00 L160.98,376.15 L161.96,371.09 L162.94,365.74 L163.90,363.00 L164.84,364.42 L165.78,368.19 L166.69,372.16 L167.60,374.20 L168.48,373.13 L169.33,370.31 L170.19,367.33 L171.10,365.80 L172.07,366.62 L173.08,368.78 L174.10,371.02 L175.10,372.10 L176.08,371.25 L177.04,369.29 L177.99,367.31 L178.90,366.40 L179.74,367.26 L180.52,369.17 L181.32,371.09 L182.20,372.00 L183.21,371.24 L184.31,369.49 L185.43,367.69 L186.50,366.80 L187.48,367.32 L188.41,368.67 L189.36,370.13 L190.40,371.00 L191.67,370.99 L193.09,370.51 L194.40,369.90 L195.30,369.50 L196.80,365.00 L198.20,345.00 L202.30,200.00 L203.70,141.40 L204.46,150.59 L205.54,164.12 L206.76,176.94 L207.90,184.00 L208.93,182.00 L209.96,174.29 L210.98,165.76 L212.00,161.30 L213.02,163.28 L214.04,168.74 L215.04,174.55 L216.00,177.60 L216.88,176.25 L217.71,172.42 L218.53,168.37 L219.40,166.30 L220.35,167.45 L221.34,170.42 L222.33,173.50 L223.30,175.00 L224.23,173.91 L225.14,171.32 L226.04,168.67 L226.90,167.40 L227.71,168.37 L228.49,170.66 L229.27,173.02 L230.10,174.20 L231.02,173.46 L231.99,171.60 L232.96,169.69 L233.90,168.80 L234.75,169.58 L235.56,171.35 L236.39,173.14 L237.30,174.00 L238.36,173.38 L239.52,171.89 L240.67,170.31 L241.70,169.40 L242.62,169.50 L243.47,170.16 L244.19,170.97 L244.70,171.50 L246.11,178.00 L249.38,270.00 L250.90,345.00 L252.80,396.40 L253.56,387.97 L254.66,375.56 L255.87,363.79 L257.00,357.30 L258.00,359.11 L258.97,366.14 L259.93,373.93 L260.90,378.00 L261.88,376.15 L262.86,371.09 L263.84,365.74 L264.80,363.00 L265.74,364.42 L266.68,368.19 L267.59,372.16 L268.50,374.20 L269.38,373.13 L270.23,370.31 L271.09,367.33 L272.00,365.80 L272.97,366.62 L273.98,368.78 L275.00,371.02 L276.00,372.10 L276.98,371.25 L277.94,369.29 L278.89,367.31 L279.80,366.40 L280.64,367.26 L281.42,369.17 L282.22,371.09 L283.10,372.00 L284.11,371.24 L285.21,369.49 L286.33,367.69 L287.40,366.80 L288.44,367.32 L289.47,368.67 L290.44,370.13 L291.30,371.00 L292.06,370.99 L292.74,370.51 L293.30,369.90 L293.70,369.50 L295.20,365.00 L296.60,345.00 L300.70,200.00 L302.10,141.40 L302.86,150.59 L303.94,164.12 L305.16,176.94 L306.30,184.00 L307.33,182.00 L308.36,174.29 L309.38,165.76 L310.40,161.30 L311.42,163.28 L312.44,168.74 L313.44,174.55 L314.40,177.60 L315.28,176.25 L316.11,172.42 L316.93,168.37 L317.80,166.30 L318.75,167.45 L319.74,170.42 L320.73,173.50 L321.70,175.00 L322.63,173.91 L323.54,171.32 L324.44,168.67 L325.30,167.40 L326.11,168.37 L326.89,170.66 L327.67,173.02 L328.50,174.20 L329.42,173.46 L330.39,171.60 L331.36,169.69 L332.30,168.80 L333.15,169.58 L333.96,171.35 L334.79,173.14 L335.70,174.00 L336.70,173.38 L337.76,171.89 L338.89,170.31 L340.10,169.40 L341.55,169.50 L343.18,170.16 L344.67,170.97 L345.70,171.50 L347.16,178.00 L350.60,270.00 L352.20,345.00 L354.20,395.90 L354.96,387.57 L356.06,375.31 L357.27,363.69 L358.40,357.30 L359.40,359.14 L360.37,366.18 L361.33,373.95 L362.30,378.00 L363.28,376.15 L364.26,371.09 L365.24,365.74 L366.20,363.00 L367.14,364.42 L368.07,368.19 L368.99,372.16 L369.90,374.20 L370.78,373.13 L371.63,370.31 L372.49,367.33 L373.40,365.80 L374.37,366.62 L375.38,368.78 L376.40,371.02 L377.40,372.10 L378.38,371.25 L379.34,369.29 L380.29,367.31 L381.20,366.40 L382.04,367.26 L382.82,369.17 L383.62,371.09 L384.50,372.00 L385.51,371.24 L386.61,369.49 L387.73,367.69 L388.80,366.80 L389.85,367.32 L390.90,368.67 L391.88,370.13 L392.70,371.00 L393.36,370.99 L393.89,370.51 L394.31,369.90 L394.60,369.50 L396.10,365.00 L397.50,345.00 L401.60,200.00 L403.00,139.50 L403.76,149.07 L404.84,163.17 L406.06,176.56 L407.20,184.00 L408.23,182.14 L409.26,174.41 L410.28,165.81 L411.30,161.30 L412.32,163.28 L413.34,168.74 L414.34,174.55 L415.30,177.60 L416.18,176.25 L417.01,172.42 L417.83,168.37 L418.70,166.30 L419.65,167.45 L420.64,170.42 L421.63,173.50 L422.60,175.00 L423.53,173.91 L424.44,171.32 L425.34,168.67 L426.20,167.40 L427.01,168.37 L427.79,170.66 L428.57,173.02 L429.40,174.20 L430.32,173.46 L431.29,171.60 L432.26,169.69 L433.20,168.80 L434.05,169.58 L434.86,171.35 L435.69,173.14 L436.60,174.00 L437.64,173.38 L438.76,171.89 L439.90,170.31 L441.00,169.40 L442.12,169.50 L443.27,170.16 L444.29,170.97 L445.00,171.50 L446.38,178.00 L449.51,270.00 L450.98,345.00 L452.80,396.00 L453.56,387.65 L454.66,375.36 L455.87,363.71 L457.00,357.30 L458.00,359.14 L458.97,366.17 L459.93,373.94 L460.90,378.00 L461.88,376.15 L462.86,371.09 L463.84,365.74 L464.80,363.00 L465.74,364.42 L466.68,368.19 L467.59,372.16 L468.50,374.20 L469.38,373.13 L470.23,370.31 L471.09,367.33 L472.00,365.80 L472.97,366.62 L473.98,368.78 L475.00,371.02 L476.00,372.10 L476.98,371.25 L477.94,369.29 L478.89,367.31 L479.80,366.40 L480.64,367.26 L481.42,369.17 L482.22,371.09 L483.10,372.00 L484.11,371.24 L485.21,369.49 L486.33,367.69 L487.40,366.80 L488.44,367.32 L489.47,368.67 L490.44,370.13 L491.30,371.00 L492.06,370.99 L492.74,370.51 L493.30,369.90 L493.70,369.50 L495.20,365.00 L496.60,345.00 L500.70,200.00 L502.10,140.00 L502.86,149.47 L503.94,163.42 L505.16,176.66 L506.30,184.00 L507.33,182.10 L508.36,174.38 L509.38,165.80 L510.40,161.30 L511.42,163.28 L512.44,168.74 L513.44,174.55 L514.40,177.60 L515.28,176.25 L516.11,172.42 L516.93,168.37 L517.80,166.30 L518.75,167.45 L519.74,170.42 L520.73,173.50 L521.70,175.00 L522.63,173.91 L523.54,171.32 L524.44,168.67 L525.30,167.40 L526.11,168.37 L526.89,170.66 L527.67,173.02 L528.50,174.20 L529.42,173.46 L530.39,171.60 L531.36,169.69 L532.30,168.80 L533.15,169.58 L533.96,171.35 L534.79,173.14 L535.70,174.00 L536.70,173.38 L537.76,171.89 L538.89,170.31 L540.10,169.40 L541.55,169.50 L543.18,170.16 L544.67,170.97 L545.70,171.50 L547.10,178.00 L550.33,270.00 L551.83,345.00 L553.70,396.80 L554.46,388.29 L555.56,375.76 L556.77,363.87 L557.90,357.30 L558.90,359.08 L559.87,366.12 L560.83,373.92 L561.80,378.00 L562.78,376.15 L563.76,371.09 L564.74,365.74 L565.70,363.00 L566.64,364.42 L567.58,368.19 L568.49,372.16 L569.40,374.20 L570.28,373.13 L571.13,370.31 L571.99,367.33 L572.90,365.80 L573.87,366.62 L574.88,368.78 L575.90,371.02 L576.90,372.10 L577.88,371.25 L578.84,369.29 L579.79,367.31 L580.70,366.40 L581.54,367.26 L582.32,369.17 L583.12,371.09 L584.00,372.00 L585.01,371.24 L586.11,369.49 L587.23,367.69 L588.30,366.80 L589.33,367.32 L590.34,368.67 L591.30,370.13 L592.20,371.00 L593.06,370.99 L593.89,370.51 L594.60,369.90 L595.10,369.50 L596.60,365.00 L598.00,345.00 L602.10,200.00 L603.50,141.40 L604.26,150.59 L605.34,164.12 L606.56,176.94 L607.70,184.00 L608.73,182.00 L609.76,174.29 L610.78,165.76 L611.80,161.30 L612.82,163.28 L613.84,168.74 L614.84,174.55 L615.80,177.60 L616.68,176.25 L617.51,172.42 L618.33,168.37 L619.20,166.30 L620.15,167.45 L621.14,170.42 L622.13,173.50 L623.10,175.00 L624.03,173.91 L624.94,171.32 L625.84,168.67 L626.70,167.40 L627.51,168.37 L628.29,170.66 L629.07,173.02 L629.90,174.20 L630.82,173.46 L631.79,171.60 L632.76,169.69 L633.70,168.80 L634.55,169.58 L635.36,171.35 L636.19,173.14 L637.10,174.00 L638.16,173.38 L639.31,171.89 L640.46,170.31 L641.50,169.40 L642.46,169.50 L643.38,170.16 L644.15,170.97 L644.70,171.50 L646.11,178.00 L649.38,270.00 L650.90,345.00 L652.80,395.90 L653.56,387.57 L654.66,375.31 L655.87,363.69 L657.00,357.30 L658.00,359.14 L658.97,366.18 L659.93,373.95 L660.90,378.00 L661.88,376.15 L662.86,371.09 L663.84,365.74 L664.80,363.00 L665.74,364.42 L666.67,368.19 L667.59,372.16 L668.50,374.20 L669.38,373.13 L670.23,370.31 L671.09,367.33 L672.00,365.80 L672.97,366.62 L673.98,368.78 L675.00,371.02 L676.00,372.10 L676.98,371.25 L677.94,369.29 L678.89,367.31 L679.80,366.40 L680.64,367.26 L681.42,369.17 L682.22,371.09 L683.10,372.00 L684.11,371.24 L685.21,369.49 L686.33,367.69 L687.40,366.80 L688.45,367.32 L689.49,368.67 L690.47,370.13 L691.30,371.00 L691.98,370.99 L692.54,370.51 L692.99,369.90 L693.30,369.50 L694.80,365.00 L696.20,345.00 L700.30,200.00 L701.70,141.90 L702.46,150.98 L703.54,164.37 L704.76,177.04 L705.90,184.00 L706.93,181.97 L707.96,174.26 L708.98,165.75 L710.00,161.30 L711.02,163.28 L712.04,168.74 L713.04,174.55 L714.00,177.60 L714.88,176.25 L715.71,172.42 L716.53,168.37 L717.40,166.30 L718.35,167.45 L719.34,170.42 L720.33,173.50 L721.30,175.00 L722.23,173.91 L723.14,171.32 L724.04,168.67 L724.90,167.40 L725.71,168.37 L726.49,170.66 L727.27,173.02 L728.10,174.20 L729.02,173.46 L729.99,171.60 L730.96,169.69 L731.90,168.80 L732.75,169.58 L733.56,171.35 L734.39,173.14 L735.30,174.00 L736.29,173.38 L737.34,171.89 L738.46,170.31 L739.70,169.40 L741.23,169.50 L742.98,170.16 L744.58,170.97 L745.70,171.50 L747.14,178.00 L750.49,270.00 L752.05,345.00 L754.00,396.00 L754.61,387.72 L755.47,375.53 L756.47,363.95 L757.50,357.50 L758.58,359.07 L759.75,365.69 L760.92,373.09 L762.00,377.00 L762.93,375.38 L763.78,370.81 L764.61,365.96 L765.50,363.50 L766.48,364.86 L767.50,368.38 L768.52,372.08 L769.50,374.00 L770.38,373.13 L771.19,370.69 L772.03,368.02 L773.00,366.50 L774.21,366.71 L775.59,367.84 L776.93,369.18 L778.00,370.00" fill="none" stroke="#d02020" stroke-width="1.2" stroke-linejoin="round"/>
<!-- cursors -->
<g fill="#ffffff" shape-rendering="crispEdges">
<rect x="400" y="59" width="1" height="182"/>
<rect x="500" y="58" width="1" height="156"/>
<rect x="381" y="89" width="141" height="1"/>
</g>
<g stroke="#ffffff" stroke-width="0.95" fill="none">
<path d="M401,89.5 L417,79 M401,89.5 L415,102 M500.5,89.5 L488,78 M500.5,89.5 L489,102"/>
</g>
<g fill="#e62630" shape-rendering="crispEdges"><rect x="437" y="54" width="23" height="3"/><rect x="446" y="57" width="5" height="27"/></g>
<!-- shield T at top of screen -->
<path d="M395.5,20.5 h12 v10.5 l-6,3.5 l-6,-3.5 z" fill="#1e0838" stroke="#8a38c8" stroke-width="1.2"/>
<path d="M397.5,24.5 h7.5 M401.2,24.5 v6.5" stroke="#a860e0" stroke-width="1.6" fill="none"/>
<!-- right magenta marker -->
<polygon points="781.5,215.75 793.5,208.75 793.5,222.5" fill="#b022dc"/>
<!-- ch1 marker -->
<polygon points="0.5,262 14.5,262 19.5,269.75 14.5,278 0.5,278" fill="#000" stroke="#a81c1c" stroke-width="1"/>
<rect x="0" y="262" width="1.6" height="16.5" fill="#d02020"/>
<path d="M9.3,265 V276.5 M5,268.8 L9.3,265.2" stroke="#d82430" stroke-width="2.3" fill="none"/>
<!-- bottom -->
<rect x="319" y="538" width="481" height="62" fill="#0a63b0"/>
<rect x="0" y="519" width="319" height="40" fill="#6aaedc"/>
<rect x="1" y="520" width="207" height="18.5" rx="3.5" fill="#000"/>
<rect x="1" y="540" width="207" height="18.5" rx="3.5" fill="#000"/>
<rect x="211" y="519.5" width="106" height="39" rx="3.5" fill="#000"/>
<rect x="319" y="519" width="100" height="19" fill="#0682e0"/>
<rect x="319.3" y="520" width="98.7" height="17.5" rx="5" ry="8.75" fill="#000"/>
<rect x="665" y="520" width="128.5" height="17.5" rx="5" ry="8.75" fill="#000"/>
<circle cx="10.5" cy="529.5" r="8" fill="#e01212"/>
<path d="M11,525.5 L10.2,535.5 M7.6,528 L11,525.6" stroke="#380404" stroke-width="2" fill="none"/>
<circle cx="10.5" cy="549" r="8" fill="#e2e020"/>
<text x="5.6" y="554.8" font-family="Liberation Sans" font-weight="bold" font-size="14" fill="#000">2</text>
<text x="18.4" y="535.75" font-family="Liberation Mono" font-size="15" stroke="#000" stroke-width="0.3" letter-spacing="0.85" fill="#d82828">1V-</text>
<text x="105.5" y="535.75" font-family="Liberation Mono" font-size="15" stroke="#000" stroke-width="0.3" letter-spacing="0.92" fill="#d82828">0.00div</text>
<text x="17.75" y="555" font-family="Liberation Mono" font-size="15" stroke="#000" stroke-width="0.3" letter-spacing="0.88" fill="#ecec9c">50.0mV~</text>
<text x="105.5" y="555" font-family="Liberation Mono" font-size="15" stroke="#000" stroke-width="0.3" letter-spacing="0.92" fill="#ecec9c">0.00div</text>
<text x="219.5" y="534" font-family="Liberation Mono" font-size="15" stroke="#000" stroke-width="0.3" letter-spacing="0.75" fill="#ffffff">(500MS/s)</text>
<text x="218.75" y="553.3" font-family="Liberation Mono" font-size="15" stroke="#000" stroke-width="0.3" letter-spacing="0.84" fill="#ffffff">Depth:10K</text>
<text x="332" y="533.7" font-family="Liberation Mono" font-size="15" stroke="#000" stroke-width="0.3" letter-spacing="1.1" fill="#ffffff">M:500ns</text>
<circle cx="675.3" cy="529" r="8" fill="#e01212"/>
<path d="M675.8,524.8 L675.2,534 M672.8,527.3 L675.8,525" stroke="#380404" stroke-width="1.8" fill="none"/>
<path d="M685,535.3 H693.5 L697.5,522.6 H704.8" fill="none" stroke="#f4f4f4" stroke-width="1.2"/>
<text x="707.6" y="534.7" font-family="Liberation Mono" font-size="15" stroke="#000" stroke-width="0.3" letter-spacing="0.6" fill="#ffffff">1.08V</text>
<!-- buttons -->
<rect x="322.5" y="540.5" width="88.3" height="55" rx="2.5" fill="#0a80e0" stroke="#08509a" stroke-width="1"/>
<path d="M323,595 V543 a2.5,2.5 0 0 1 2.5,-2.5 H410" fill="none" stroke="#52aef2" stroke-width="1.2"/>
<text x="346" y="562" font-family="Liberation Mono" font-size="15" letter-spacing="1.05" fill="#0c2470">Type</text>
<rect x="340.6" y="570.7" width="50.4" height="20.1" fill="#e4e4e4"/>
<text x="342.1" y="585.5" font-family="Liberation Mono" font-size="15" letter-spacing="0.85" fill="#000">Image</text>
<rect x="597.6" y="540.8" width="88.7" height="54.7" rx="2.5" fill="#0a80e0" stroke="#08509a" stroke-width="1"/>
<path d="M598.1,595 V543.3 a2.5,2.5 0 0 1 2.5,-2.5 H686" fill="none" stroke="#52aef2" stroke-width="1.2"/>
<text x="620.9" y="573.8" font-family="Liberation Mono" font-size="15" letter-spacing="1.05" fill="#0c2470">Save</text>
</svg>
</body></html>
